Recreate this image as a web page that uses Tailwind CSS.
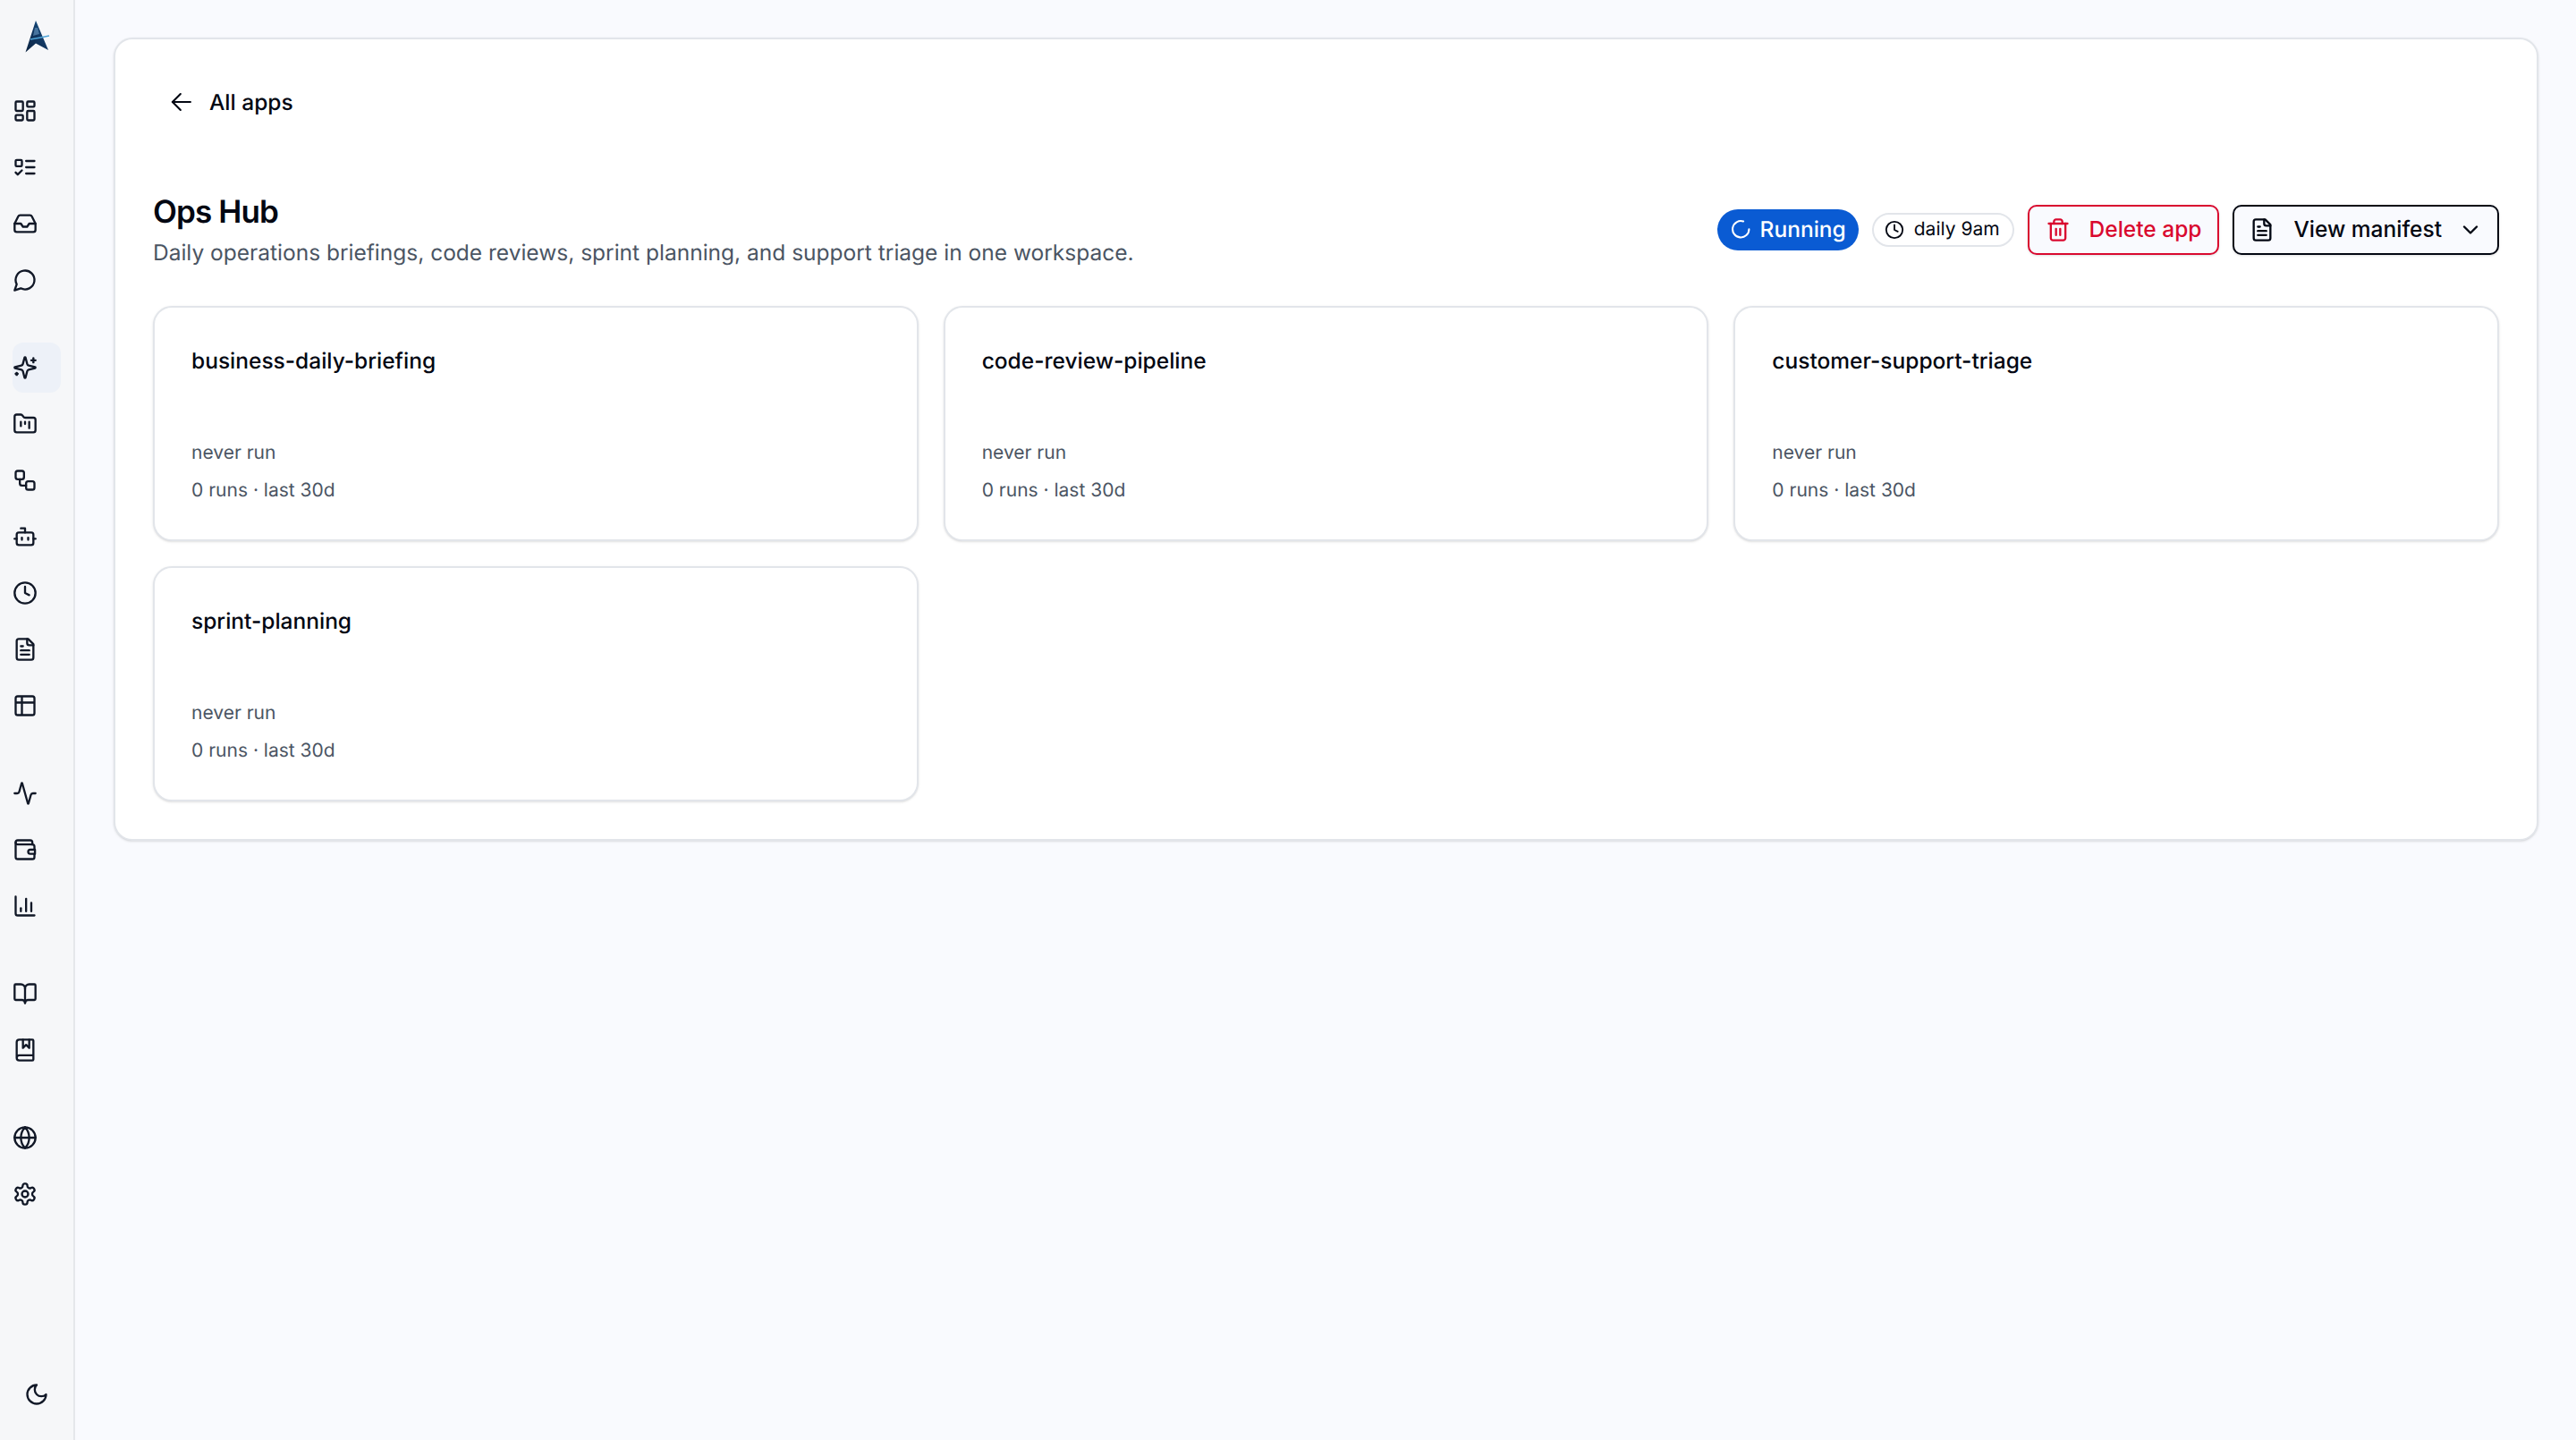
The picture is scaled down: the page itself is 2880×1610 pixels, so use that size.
<!DOCTYPE html>
<html lang="en">
<head>
  <meta charset="UTF-8">
  <title>Ops Hub</title>
  <script src="https://cdn.jsdelivr.net/npm/@tailwindcss/browser@4"></script>
</head>
<body class="h-screen overflow-hidden bg-[#f9fafe] font-['Inter',sans-serif] text-[#030712] antialiased [text-rendering:geometricPrecision]">
  <div class="flex h-full">
    <!-- Sidebar -->
    <aside class="w-[84px] shrink-0 flex flex-col bg-[#f6f7f9] border-r-2 border-[#e5e7eb] text-[#111827]">
      <div class="h-[96px] flex justify-center pt-[22px]">
        <svg class="w-[30px] h-[38px]" viewBox="0 0 30 38">
          <defs><linearGradient id="lg" x1="0" y1="1" x2="1" y2="0"><stop offset="0" stop-color="#0c2340"/><stop offset="0.6" stop-color="#123a66"/><stop offset="1" stop-color="#1c6ea8"/></linearGradient></defs>
          <path d="M14 1 L2.5 36.5 L14 26.5 L28 34 Z" fill="url(#lg)"/>
          <path d="M13 9 L16 9 L18 16 L11 18 Z" fill="#5f8fb8" opacity="0.7"/>
          <path d="M8 22 C14 21 20 20 29 18" stroke="#4fa3d6" stroke-width="1.5" fill="none"/>
        </svg>
      </div>
      <nav class="flex flex-col gap-[42px]">
        <div class="flex flex-col gap-[7px]">
          <a class="w-[54px] h-[56px] ml-[14px] flex items-center"><svg class="w-[28px] h-[28px]" viewBox="0 0 24 24" fill="none" stroke="currentColor" stroke-width="2" stroke-linecap="round" stroke-linejoin="round"><rect width="7" height="9" x="3" y="3" rx="1"/><rect width="7" height="5" x="14" y="3" rx="1"/><rect width="7" height="9" x="14" y="12" rx="1"/><rect width="7" height="5" x="3" y="16" rx="1"/></svg></a>
          <a class="w-[54px] h-[56px] ml-[14px] flex items-center"><svg class="w-[28px] h-[28px]" viewBox="0 0 24 24" fill="none" stroke="currentColor" stroke-width="2" stroke-linecap="round" stroke-linejoin="round"><rect x="3" y="5" width="6" height="6" rx="1"/><path d="m3 17 2 2 4-4"/><path d="M13 6h8"/><path d="M13 12h8"/><path d="M13 18h8"/></svg></a>
          <a class="w-[54px] h-[56px] ml-[14px] flex items-center"><svg class="w-[28px] h-[28px]" viewBox="0 0 24 24" fill="none" stroke="currentColor" stroke-width="2" stroke-linecap="round" stroke-linejoin="round"><polyline points="22 12 16 12 14 15 10 15 8 12 2 12"/><path d="M5.45 5.11 2 12v6a2 2 0 0 0 2 2h16a2 2 0 0 0 2-2v-6l-3.45-6.89A2 2 0 0 0 16.76 4H7.24a2 2 0 0 0-1.79 1.11z"/></svg></a>
          <a class="w-[54px] h-[56px] ml-[14px] flex items-center"><svg class="w-[28px] h-[28px]" viewBox="0 0 24 24" fill="none" stroke="currentColor" stroke-width="2" stroke-linecap="round" stroke-linejoin="round"><path d="M7.9 20A9 9 0 1 0 4 16.1L2 22Z"/></svg></a>
        </div>
        <div class="flex flex-col gap-[7px]">
          <a class="w-[54px] h-[56px] ml-[14px] flex items-center bg-[#edf1f8] rounded-[12px]"><svg class="w-[28px] h-[28px]" viewBox="0 0 24 24" fill="none" stroke="currentColor" stroke-width="2" stroke-linecap="round" stroke-linejoin="round"><path d="M9.937 15.5A2 2 0 0 0 8.5 14.063l-6.135-1.582a.5.5 0 0 1 0-.962L8.5 9.936A2 2 0 0 0 9.937 8.5l1.582-6.135a.5.5 0 0 1 .963 0L14.063 8.5A2 2 0 0 0 15.5 9.937l6.135 1.581a.5.5 0 0 1 0 .964L15.5 14.063a2 2 0 0 0-1.437 1.437l-1.582 6.135a.5.5 0 0 1-.963 0z"/><path d="M20 3v4"/><path d="M22 5h-4"/><path d="M4 17v2"/><path d="M5 18H3"/></svg></a>
          <a class="w-[54px] h-[56px] ml-[14px] flex items-center"><svg class="w-[28px] h-[28px]" viewBox="0 0 24 24" fill="none" stroke="currentColor" stroke-width="2" stroke-linecap="round" stroke-linejoin="round"><path d="M4 20h16a2 2 0 0 0 2-2V8a2 2 0 0 0-2-2h-7.93a2 2 0 0 1-1.66-.9l-.82-1.2A2 2 0 0 0 7.93 3H4a2 2 0 0 0-2 2v13c0 1.1.9 2 2 2Z"/><path d="M8 10v4"/><path d="M12 10v2"/><path d="M16 10v6"/></svg></a>
          <a class="w-[54px] h-[56px] ml-[14px] flex items-center"><svg class="w-[28px] h-[28px]" viewBox="0 0 24 24" fill="none" stroke="currentColor" stroke-width="2" stroke-linecap="round" stroke-linejoin="round"><rect width="8" height="8" x="3" y="3" rx="2"/><path d="M7 11v4a2 2 0 0 0 2 2h4"/><rect width="8" height="8" x="13" y="13" rx="2"/></svg></a>
          <a class="w-[54px] h-[56px] ml-[14px] flex items-center"><svg class="w-[28px] h-[28px]" viewBox="0 0 24 24" fill="none" stroke="currentColor" stroke-width="2" stroke-linecap="round" stroke-linejoin="round"><path d="M12 8V4H8"/><rect width="16" height="12" x="4" y="8" rx="2"/><path d="M2 14h2"/><path d="M20 14h2"/><path d="M15 13v2"/><path d="M9 13v2"/></svg></a>
          <a class="w-[54px] h-[56px] ml-[14px] flex items-center"><svg class="w-[28px] h-[28px]" viewBox="0 0 24 24" fill="none" stroke="currentColor" stroke-width="2" stroke-linecap="round" stroke-linejoin="round"><circle cx="12" cy="12" r="10"/><polyline points="12 6 12 12 16 14"/></svg></a>
          <a class="w-[54px] h-[56px] ml-[14px] flex items-center"><svg class="w-[28px] h-[28px]" viewBox="0 0 24 24" fill="none" stroke="currentColor" stroke-width="2" stroke-linecap="round" stroke-linejoin="round"><path d="M15 2H6a2 2 0 0 0-2 2v16a2 2 0 0 0 2 2h12a2 2 0 0 0 2-2V7Z"/><path d="M14 2v4a2 2 0 0 0 2 2h4"/><path d="M10 9H8"/><path d="M16 13H8"/><path d="M16 17H8"/></svg></a>
          <a class="w-[54px] h-[56px] ml-[14px] flex items-center"><svg class="w-[28px] h-[28px]" viewBox="0 0 24 24" fill="none" stroke="currentColor" stroke-width="2" stroke-linecap="round" stroke-linejoin="round"><path d="M9 3H5a2 2 0 0 0-2 2v4m6-6h10a2 2 0 0 1 2 2v4M9 3v18m0 0h10a2 2 0 0 0 2-2V9M9 21H5a2 2 0 0 1-2-2V9m0 0h18"/></svg></a>
        </div>
        <div class="flex flex-col gap-[7px]">
          <a class="w-[54px] h-[56px] ml-[14px] flex items-center"><svg class="w-[28px] h-[28px]" viewBox="0 0 24 24" fill="none" stroke="currentColor" stroke-width="2" stroke-linecap="round" stroke-linejoin="round"><path d="M22 12h-2.48a2 2 0 0 0-1.93 1.46l-2.35 8.36a.25.25 0 0 1-.48 0L9.24 2.18a.25.25 0 0 0-.48 0l-2.35 8.36A2 2 0 0 1 4.49 12H2"/></svg></a>
          <a class="w-[54px] h-[56px] ml-[14px] flex items-center"><svg class="w-[28px] h-[28px]" viewBox="0 0 24 24" fill="none" stroke="currentColor" stroke-width="2" stroke-linecap="round" stroke-linejoin="round"><path d="M19 7V5a2 2 0 0 0-2-2H5a2 2 0 0 0-2 2v14a2 2 0 0 0 2 2h14a2 2 0 0 0 2-2v-3"/><path d="M3 5a2 2 0 0 0 2 2h14a2 2 0 0 1 2 2v3"/><path d="M17 12h4.5v4H17a2 2 0 0 1 0-4z"/></svg></a>
          <a class="w-[54px] h-[56px] ml-[14px] flex items-center"><svg class="w-[28px] h-[28px]" viewBox="0 0 24 24" fill="none" stroke="currentColor" stroke-width="2" stroke-linecap="round" stroke-linejoin="round"><path d="M3 3v16a2 2 0 0 0 2 2h16"/><path d="M18 17V9"/><path d="M13 17V5"/><path d="M8 17v-3"/></svg></a>
        </div>
        <div class="flex flex-col gap-[7px]">
          <a class="w-[54px] h-[56px] ml-[14px] flex items-center"><svg class="w-[28px] h-[28px]" viewBox="0 0 24 24" fill="none" stroke="currentColor" stroke-width="2" stroke-linecap="round" stroke-linejoin="round"><path d="M12 7v14"/><path d="M3 18a1 1 0 0 1-1-1V4a1 1 0 0 1 1-1h5a4 4 0 0 1 4 4 4 4 0 0 1 4-4h5a1 1 0 0 1 1 1v13a1 1 0 0 1-1 1h-6a3 3 0 0 0-3 3 3 3 0 0 0-3-3z"/></svg></a>
          <a class="w-[54px] h-[56px] ml-[14px] flex items-center"><svg class="w-[28px] h-[28px]" viewBox="0 0 24 24" fill="none" stroke="currentColor" stroke-width="2" stroke-linecap="round" stroke-linejoin="round"><path d="M10 2v8l3-3 3 3V2"/><path d="M4 19.5v-15A2.5 2.5 0 0 1 6.5 2H19a1 1 0 0 1 1 1v18a1 1 0 0 1-1 1H6.5a1 1 0 0 1 0-5H20"/></svg></a>
        </div>
        <div class="flex flex-col gap-[7px]">
          <a class="w-[54px] h-[56px] ml-[14px] flex items-center"><svg class="w-[28px] h-[28px]" viewBox="0 0 24 24" fill="none" stroke="currentColor" stroke-width="2" stroke-linecap="round" stroke-linejoin="round"><circle cx="12" cy="12" r="10"/><path d="M12 2a14.5 14.5 0 0 0 0 20 14.5 14.5 0 0 0 0-20"/><path d="M2 12h20"/></svg></a>
          <a class="w-[54px] h-[56px] ml-[14px] flex items-center"><svg class="w-[28px] h-[28px]" viewBox="0 0 24 24" fill="none" stroke="currentColor" stroke-width="2" stroke-linecap="round" stroke-linejoin="round"><path d="M12.22 2h-.44a2 2 0 0 0-2 2v.18a2 2 0 0 1-1 1.73l-.43.25a2 2 0 0 1-2 0l-.15-.08a2 2 0 0 0-2.73.73l-.22.38a2 2 0 0 0 .73 2.73l.15.1a2 2 0 0 1 1 1.72v.51a2 2 0 0 1-1 1.74l-.15.09a2 2 0 0 0-.73 2.73l.22.38a2 2 0 0 0 2.73.73l.15-.08a2 2 0 0 1 2 0l.43.25a2 2 0 0 1 1 1.73V20a2 2 0 0 0 2 2h.44a2 2 0 0 0 2-2v-.18a2 2 0 0 1 1-1.73l.43-.25a2 2 0 0 1 2 0l.15.08a2 2 0 0 0 2.73-.73l.22-.39a2 2 0 0 0-.73-2.73l-.15-.08a2 2 0 0 1-1-1.74v-.5a2 2 0 0 1 1-1.74l.15-.09a2 2 0 0 0 .73-2.73l-.22-.38a2 2 0 0 0-2.73-.73l-.15.08a2 2 0 0 1-2 0l-.43-.25a2 2 0 0 1-1-1.73V4a2 2 0 0 0-2-2z"/><circle cx="12" cy="12" r="3"/></svg></a>
        </div>
      </nav>
      <div class="mt-auto h-[84px] flex justify-center pt-[19px]">
        <svg class="w-[28px] h-[28px]" viewBox="0 0 24 24" fill="none" stroke="currentColor" stroke-width="2" stroke-linecap="round" stroke-linejoin="round"><path d="M12 3a6 6 0 0 0 9 9 9 9 0 1 1-9-9Z"/></svg>
      </div>
    </aside>

    <!-- Main -->
    <main class="flex-1 pt-[42px] pl-[43px] pr-[42px]">
      <div class="bg-white border-2 border-[#e2e5ea] rounded-[21px] shadow-sm pt-[42px] px-[42px] pb-[42px]">
        <a class="h-[56px] pl-[18px] flex items-center gap-[17px] text-[24.5px] font-medium">
          <svg class="w-[28px] h-[28px]" viewBox="0 0 24 24" fill="none" stroke="currentColor" stroke-width="1.8" stroke-linecap="round" stroke-linejoin="round"><path d="m11 19.7-7.7-7.7 7.7-7.7"/><path d="M20.5 12H3.3"/></svg>
          All apps
        </a>

        <div class="mt-[71px] flex items-center justify-between">
          <div>
            <h1 class="text-[35px] leading-[49px] font-semibold tracking-tight">Ops Hub</h1>
            <p class="mt-[3px] text-[24.5px] leading-[35px] text-[#4b5563]">Daily operations briefings, code reviews, sprint planning, and support triage in one workspace.</p>
          </div>
          <div class="flex items-center gap-[15px]">
            <span class="h-[46px] px-[14px] rounded-full bg-[#0a5bd3] text-white flex items-center gap-[9px] text-[24.5px] font-medium">
              <svg class="w-[24.5px] h-[24.5px]" viewBox="0 0 24 24" fill="none" stroke="currentColor" stroke-width="2" stroke-linecap="round" stroke-linejoin="round"><path d="M21 12a9 9 0 1 1-6.219-8.56"/></svg>
              Running
            </span>
            <span class="h-[38px] pl-[12px] pr-[14px] rounded-full bg-white border-2 border-[#e2e5ea] flex items-center gap-[11px] text-[21px]">
              <svg class="w-[22px] h-[22px]" viewBox="0 0 24 24" fill="none" stroke="currentColor" stroke-width="2" stroke-linecap="round" stroke-linejoin="round"><circle cx="12" cy="12" r="10"/><polyline points="12 6 12 12 16 14"/></svg>
              daily 9am
            </span>
            <button class="h-[56px] px-[18px] rounded-[10px] bg-[#f9fafe] border-2 border-[#d9092f] text-[#d9092f] shadow-sm flex items-center gap-[21px] text-[24.5px] font-medium">
              <svg class="w-[28px] h-[28px]" viewBox="0 0 24 24" fill="none" stroke="currentColor" stroke-width="2" stroke-linecap="round" stroke-linejoin="round"><path d="M3 6h18"/><path d="M19 6v14c0 1-1 2-2 2H7c-1 0-2-1-2-2V6"/><path d="M8 6V4c0-1 1-2 2-2h4c1 0 2 1 2 2v2"/><line x1="10" x2="10" y1="11" y2="17"/><line x1="14" x2="14" y1="11" y2="17"/></svg>
              Delete app
            </button>
            <button class="h-[56px] pl-[17px] pr-[16px] rounded-[10px] bg-[#f9fafe] border-2 border-[#030712] shadow-sm flex items-center text-[24.5px] font-medium">
              <svg class="w-[28px] h-[28px] mr-[21px]" viewBox="0 0 24 24" fill="none" stroke="currentColor" stroke-width="2" stroke-linecap="round" stroke-linejoin="round"><path d="M15 2H6a2 2 0 0 0-2 2v16a2 2 0 0 0 2 2h12a2 2 0 0 0 2-2V7Z"/><path d="M14 2v4a2 2 0 0 0 2 2h4"/><path d="M10 9H8"/><path d="M16 13H8"/><path d="M16 17H8"/></svg>
              View manifest
              <svg class="w-[28px] h-[28px] ml-[18px]" viewBox="0 0 24 24" fill="none" stroke="currentColor" stroke-width="2" stroke-linecap="round" stroke-linejoin="round"><path d="m6 9 6 6 6-6"/></svg>
            </button>
          </div>
        </div>

        <div class="mt-[42px] grid grid-cols-3 gap-[28px]">
          <div class="bg-white border-2 border-[#e2e5ea] rounded-[21px] shadow-sm pl-[41px] pr-[42px] pt-[42px] pb-[40px]">
            <div class="text-[24.5px] leading-[35px] font-medium">business-daily-briefing</div>
            <div class="mt-[72px] text-[21px] leading-[28px] text-[#4b5563]">never run</div>
            <div class="mt-[14px] text-[21px] leading-[28px] text-[#4b5563]">0 runs · last 30d</div>
          </div>
          <div class="bg-white border-2 border-[#e2e5ea] rounded-[21px] shadow-sm pl-[41px] pr-[42px] pt-[42px] pb-[40px]">
            <div class="text-[24.5px] leading-[35px] font-medium">code-review-pipeline</div>
            <div class="mt-[72px] text-[21px] leading-[28px] text-[#4b5563]">never run</div>
            <div class="mt-[14px] text-[21px] leading-[28px] text-[#4b5563]">0 runs · last 30d</div>
          </div>
          <div class="bg-white border-2 border-[#e2e5ea] rounded-[21px] shadow-sm pl-[41px] pr-[42px] pt-[42px] pb-[40px]">
            <div class="text-[24.5px] leading-[35px] font-medium">customer-support-triage</div>
            <div class="mt-[72px] text-[21px] leading-[28px] text-[#4b5563]">never run</div>
            <div class="mt-[14px] text-[21px] leading-[28px] text-[#4b5563]">0 runs · last 30d</div>
          </div>
          <div class="bg-white border-2 border-[#e2e5ea] rounded-[21px] shadow-sm pl-[41px] pr-[42px] pt-[42px] pb-[40px]">
            <div class="text-[24.5px] leading-[35px] font-medium">sprint-planning</div>
            <div class="mt-[72px] text-[21px] leading-[28px] text-[#4b5563]">never run</div>
            <div class="mt-[14px] text-[21px] leading-[28px] text-[#4b5563]">0 runs · last 30d</div>
          </div>
        </div>
      </div>
    </main>
  </div>
</body>
</html>
